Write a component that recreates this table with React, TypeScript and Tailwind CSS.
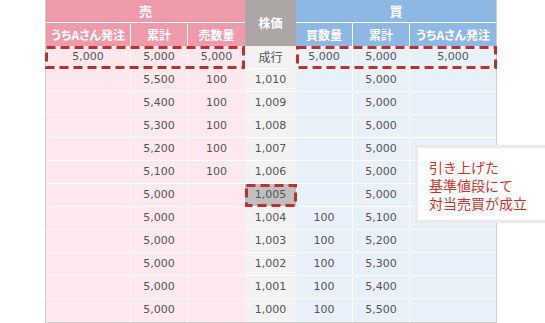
import React from "react";

const rows: string[][] = [
  ["5,000", "5,000", "5,000", "成行", "5,000", "5,000", "5,000"],
  ["", "5,500", "100", "1,010", "", "5,000", ""],
  ["", "5,400", "100", "1,009", "", "5,000", ""],
  ["", "5,300", "100", "1,008", "", "5,000", ""],
  ["", "5,200", "100", "1,007", "", "5,000", ""],
  ["", "5,100", "100", "1,006", "", "5,000", ""],
  ["", "5,000", "", "1,005", "", "5,000", ""],
  ["", "5,000", "", "1,004", "100", "5,100", ""],
  ["", "5,000", "", "1,003", "100", "5,200", ""],
  ["", "5,000", "", "1,002", "100", "5,300", ""],
  ["", "5,000", "", "1,001", "100", "5,400", ""],
  ["", "5,000", "", "1,000", "100", "5,500", ""],
];

const jp = "font-['Noto_Sans_CJK_JP',sans-serif]";
const num = "font-['DejaVu_Sans','Noto_Sans_CJK_JP',sans-serif]";

function cellBg(ci: number, ri: number) {
  if (ci === 3) return ri === 6 ? "bg-[#bfbfbf]" : "bg-[#f2f2f2]";
  if (ci < 3) return "bg-[#fde9ed]";
  return "bg-[#e8f0fa]";
}

function Dashed({ w, h }: { w: number; h: number }) {
  return (
    <svg width={w} height={h} className="absolute inset-0" viewBox={`0 0 ${w} ${h}`}>
      <rect
        x={1.5}
        y={1.5}
        width={w - 3}
        height={h - 3}
        fill="none"
        stroke="#c0302a"
        strokeWidth={3}
        strokeDasharray="9 5"
      />
    </svg>
  );
}

export default function App() {
  return (
    <div className="relative w-[545px] h-[323px] overflow-hidden bg-white">
      <div className="flex pl-[45px]">
        <div className="relative border-l border-r border-b border-[#cdcdcd]">
          <div className="grid grid-cols-[85px_57px_57px_51px_57px_57px_86px] grid-rows-[repeat(14,23px)]">
            <div
              className={`col-span-3 bg-[#ee9aab] border-b border-white flex items-center justify-center text-white font-bold text-[13px] ${jp}`}
            >
              売
            </div>
            <div
              className={`row-span-2 bg-[#aca6a5] flex items-center justify-center text-white font-bold text-[12px] ${jp}`}
            >
              株価
            </div>
            <div
              className={`col-span-3 bg-[#8db8e3] border-b border-white flex items-center justify-center text-white font-bold text-[13px] ${jp}`}
            >
              買
            </div>
            <div
              className={`bg-[#ee9aab] border-r border-white flex items-center justify-center text-white font-bold text-[12px] [font-feature-settings:'palt'] ${jp}`}
            >
              うちAさん発注
            </div>
            <div
              className={`bg-[#ee9aab] border-r border-white flex items-center justify-center text-white font-bold text-[12px] ${jp}`}
            >
              累計
            </div>
            <div
              className={`bg-[#ee9aab] flex items-center justify-center text-white font-bold text-[12px] ${jp}`}
            >
              売数量
            </div>
            <div
              className={`bg-[#8db8e3] border-r border-white flex items-center justify-center text-white font-bold text-[12px] ${jp}`}
            >
              買数量
            </div>
            <div
              className={`bg-[#8db8e3] border-r border-white flex items-center justify-center text-white font-bold text-[12px] ${jp}`}
            >
              累計
            </div>
            <div
              className={`bg-[#8db8e3] flex items-center justify-center text-white font-bold text-[12px] [font-feature-settings:'palt'] ${jp}`}
            >
              うちAさん発注
            </div>
            {rows.map((r, ri) =>
              r.map((v, ci) => (
                <div
                  key={`${ri}-${ci}`}
                  className={`${cellBg(ci, ri)} ${ri < rows.length - 1 ? "border-b border-white" : ""} ${
                    ci === 0 || ci === 1 || ci === 4 || ci === 5 ? "border-r border-white" : ""
                  } flex items-center justify-center text-[11px] text-[#555555] ${v === "成行" ? `${jp} text-[12px]` : num}`}
                >
                  {v}
                </div>
              ))
            )}
          </div>
          <div className="absolute left-[-1px] top-[46px] w-[200px] h-[23px]">
            <Dashed w={200} h={23} />
          </div>
          <div className="absolute left-[250px] top-[46px] w-[201px] h-[23px]">
            <Dashed w={201} h={23} />
          </div>
          <div className="absolute left-[199px] top-[184px] w-[52px] h-[23px]">
            <Dashed w={52} h={23} />
          </div>
        </div>
      </div>
      <div
        className={`absolute left-[415px] top-[145px] w-[140px] h-[78px] bg-white border-[3px] border-[#ebebeb] pl-[11px] pt-[10px] text-[14px] leading-[18px] font-normal text-[#c8372d] ${jp}`}
      >
        <div>引き上げた</div>
        <div>基準値段にて</div>
        <div>対当売買が成立</div>
      </div>
    </div>
  );
}
